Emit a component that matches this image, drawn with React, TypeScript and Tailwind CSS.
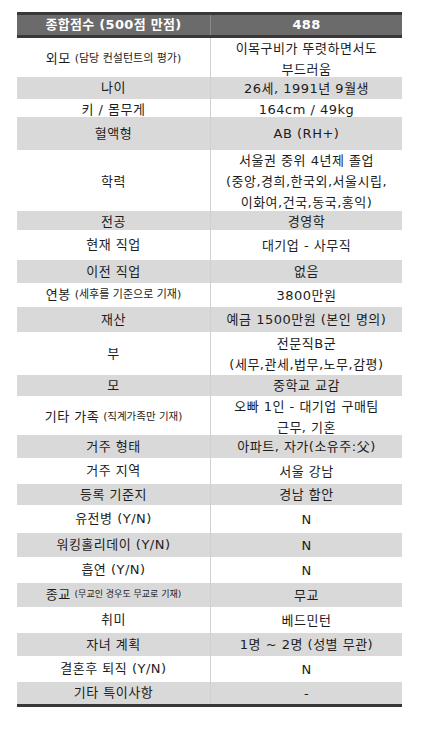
import React from 'react';

interface Row {
  label: string;
  sub?: string;
  subSize?: string;
  value: string[];
  h: string;
}

// heights measured from the reference, rows alternate white / gray starting with white
const ROWS: Row[] = [
  { label: '외모', sub: '(담당 컨설턴트의 평가)', subSize: 'text-[11px]', value: ['이목구비가 뚜렷하면서도', '부드러움'], h: 'h-[39px]' },
  { label: '나이', value: ['26세, 1991년 9월생'], h: 'h-[22px]' },
  { label: '키 / 몸무게', value: ['164cm / 49kg'], h: 'h-[18px]' },
  { label: '혈액형', value: ['AB (RH+)'], h: 'h-[33px]' },
  { label: '학력', value: ['서울권 중위 4년제 졸업', '(중앙,경희,한국외,서울시립,', '이화여,건국,동국,홍익)'], h: 'h-[61px]' },
  { label: '전공', value: ['경영학'], h: 'h-[19px]' },
  { label: '현재 직업', value: ['대기업 - 사무직'], h: 'h-[30px]' },
  { label: '이전 직업', value: ['없음'], h: 'h-[23px]' },
  { label: '연봉', sub: '(세후를 기준으로 기재)', subSize: 'text-[11px]', value: ['3800만원'], h: 'h-[24px]' },
  { label: '재산', value: ['예금 1500만원 (본인 명의)'], h: 'h-[25px]' },
  { label: '부', value: ['전문직B군', '(세무,관세,법무,노무,감평)'], h: 'h-[43px]' },
  { label: '모', value: ['중학교 교감'], h: 'h-[21px]' },
  { label: '기타 가족', sub: '(직계가족만 기재)', subSize: 'text-[10.5px]', value: ['오빠 1인 - 대기업 구매팀', '근무, 기혼'], h: 'h-[39px]' },
  { label: '거주 형태', value: ['아파트, 자가(소유주:父)'], h: 'h-[23px]' },
  { label: '거주 지역', value: ['서울 강남'], h: 'h-[26px]' },
  { label: '등록 기준지', value: ['경남 함안'], h: 'h-[21px]' },
  { label: '유전병 (Y/N)', value: ['N'], h: 'h-[28px]' },
  { label: '워킹홀리데이 (Y/N)', value: ['N'], h: 'h-[24px]' },
  { label: '흡연 (Y/N)', value: ['N'], h: 'h-[26px]' },
  { label: '종교', sub: '(무교인 경우도 무교로 기재)', subSize: 'text-[9px]', value: ['무교'], h: 'h-[24px]' },
  { label: '취미', value: ['베드민턴'], h: 'h-[26px]' },
  { label: '자녀 계획', value: ['1명 ~ 2명 (성별 무관)'], h: 'h-[23px]' },
  { label: '결혼후 퇴직 (Y/N)', value: ['N'], h: 'h-[26px]' },
  { label: '기타 특이사항', value: ['-'], h: 'h-[22px]' },
];

const FONT = "font-['DejaVu_Sans','Noto_Sans_CJK_KR',sans-serif]";

export default function App() {
  return (
    <div className={`min-h-[742px] bg-white pt-[12px] pl-[17px] ${FONT} text-[#1c1c1c]`}>
      <div className="w-[385px]">
        <div className="grid grid-cols-[193px_192px] h-[26px] bg-[#6b6b6b] border-y-[3px] border-[#383838] text-white font-bold text-[13px] tracking-[0.3px]">
          <div className="flex items-center justify-center">종합점수 (500점 만점)</div>
          <div className="flex items-center justify-center border-l border-[#8a8a8a]">488</div>
        </div>
        {ROWS.map((r, i) => (
          <div
            key={r.label}
            className={`grid grid-cols-[193px_192px] ${r.h} ${i % 2 === 1 ? 'bg-[#d9d9d9]' : 'bg-white'} text-[13px] tracking-[0.5px]`}
          >
            <div className="flex items-center justify-center text-center whitespace-nowrap">
              {r.label}
              {r.sub && <span className={`${r.subSize} ml-[4px] tracking-normal`}>{r.sub}</span>}
            </div>
            <div className="flex flex-col items-center justify-center text-center leading-[21px] whitespace-nowrap border-l border-[#d0d0d0]">
              {r.value.map((line) => (
                <span key={line}>{line}</span>
              ))}
            </div>
          </div>
        ))}
        <div className="h-[3px] bg-[#383838]" />
      </div>
    </div>
  );
}
